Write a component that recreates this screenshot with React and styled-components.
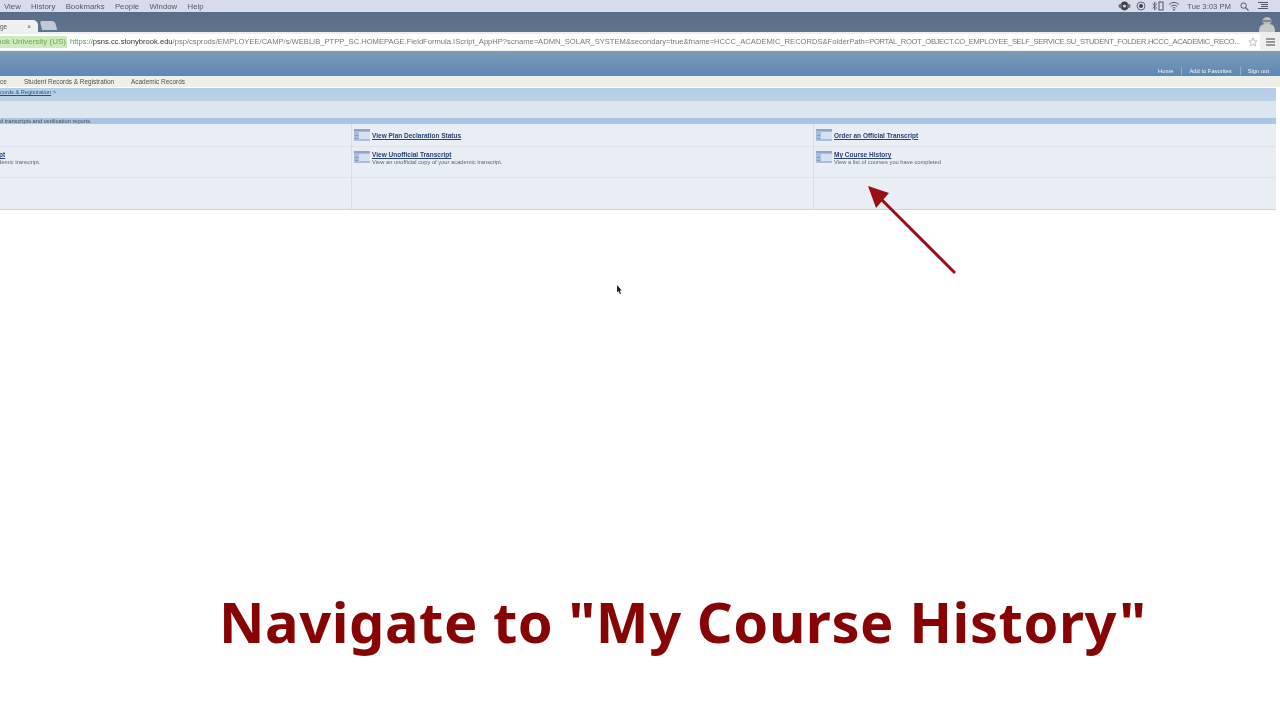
import React from "react";
import styled, { createGlobalStyle } from "styled-components";

const Global = createGlobalStyle`
  html, body { margin: 0; padding: 0; background: #fff; }
  body { font-family: "Liberation Sans", Arial, sans-serif; overflow: hidden; }
`;

const Screen = styled.div`
  position: relative;
  width: 1280px;
  height: 720px;
  overflow: hidden;
  background: #fff;
  display: flex;
  flex-direction: column;
  filter: blur(0.35px);
`;

/* mac menu bar */
const MenuBar = styled.div`
  height: 12px;
  flex: none;
  background: #d8dcea;
  display: flex;
  align-items: center;
  padding: 0 0 0 4px;
  font-size: 7.8px;
  color: #55585f;
`;
const MenuItem = styled.span`
  margin-right: 10.3px;
`;
const StatusArea = styled.div`
  margin-left: auto;
  display: flex;
  align-items: center;
  color: #55585f;
`;
const Clock = styled.span`
  font-size: 7.7px;
  margin: 0 9px 0 7px;
`;

/* browser chrome */
const TabStrip = styled.div`
  height: 20px;
  flex: none;
  background: linear-gradient(#596c89, #61748f);
  display: flex;
  align-items: flex-end;
  justify-content: space-between;
`;
const ActiveTab = styled.div`
  width: 38px;
  height: 12px;
  background: #f0f0f0;
  border-radius: 0 5px 0 0;
  display: flex;
  align-items: center;
  justify-content: space-between;
  padding-right: 7px;
  box-sizing: border-box;
  font-size: 6.5px;
  color: #555;
`;
const NewTab = styled.div`
  width: 15px;
  height: 9px;
  margin: 0 auto 2px 3px;
  background: #c3c9d3;
  border-radius: 2px 3px 0 0;
  transform: skewX(15deg);
`;
const AddressRow = styled.div`
  height: 19px;
  flex: none;
  background: #eeeeee;
  display: flex;
  align-items: center;
`;
const UrlField = styled.div`
  flex: 1;
  min-width: 0;
  height: 16px;
  background: #fff;
  display: flex;
  align-items: center;
  font-size: 7.6px;
  white-space: nowrap;
  overflow: hidden;
  color: #777;
`;
const SecureBadge = styled.span`
  flex: none;
  width: 67px;
  background: #cfeabd;
  color: #6aa354;
  font-size: 8px;
  line-height: 12px;
  margin-right: 3px;
  display: flex;
  justify-content: flex-end;
  padding-right: 1px;
  box-sizing: border-box;
`;
const Scheme = styled.span`
  color: #4fa14a;
`;
const Host = styled.span`
  color: #333;
`;
const UrlTail = styled.span`
  flex: 1;
  min-width: 0;
  overflow: hidden;
`;
const UrlEnd = styled.span`
  letter-spacing: -0.33px;
`;
const StarSlot = styled.div`
  flex: none;
  width: 14px;
  display: flex;
  justify-content: center;
`;
const MenuSlot = styled.div`
  flex: none;
  width: 20px;
  height: 19px;
  display: flex;
  align-items: center;
  justify-content: center;
`;

/* portal */
const Banner = styled.div`
  height: 25px;
  box-sizing: border-box;
  flex: none;
  background: linear-gradient(#7e9cb7, #5d88b4);
  display: flex;
  align-items: flex-end;
  justify-content: flex-end;
  padding: 0 11px 1px 0;
  font-size: 5.8px;
  color: #f2f6fb;
`;
const BannerLink = styled.span`
  line-height: 8px;
  padding: 0 ${(p) => (p.$last ? "0" : p.$pad + "px")} 0 ${(p) => (p.$last ? "7px" : "8px")};
  border-right: ${(p) => (p.$last ? "none" : "1px solid #8fb0cf")};
`;
const CrumbBar = styled.div`
  height: 11px;
  flex: none;
  background: #efefea;
  display: flex;
  align-items: center;
  font-size: 6.45px;
  color: #505050;
  border-bottom: 1px solid #fff;
`;
const Crumb = styled.span`
  width: ${(p) => p.$w}px;
  flex: none;
  white-space: nowrap;
`;
const Portal = styled.div`
  width: 1276px;
  flex: none;
  background: #e9edf4;
  border-bottom: 1px solid #cfd2d8;
`;
const PathBar = styled.div`
  height: 13px;
  background: linear-gradient(#b5cde5, #bdd2e8);
  font-size: 5.7px;
  line-height: 9px;
  color: #555;
`;
const PathLink = styled.span`
  color: #1f4f8a;
  text-decoration: underline;
`;
const Spacer = styled.div`
  height: 17px;
  background: #dde6ee;
`;
const SectionBar = styled.div`
  height: 6px;
  background: #a9c5e6;
  font-size: 5.7px;
  line-height: 6px;
  color: #444b55;
  white-space: nowrap;
`;
const Grid = styled.div`
  display: grid;
  grid-template-columns: 352px 462px 1fr;
  grid-template-rows: 23px 31px 31px;
`;
const Cell = styled.div`
  display: flex;
  align-items: ${(p) => (p.$top ? "flex-start" : "center")};
  padding: ${(p) => (p.$top ? "4px" : "0")} 0 0 ${(p) => (p.$edge ? "0" : "2px")};
  box-sizing: border-box;
  border-bottom: ${(p) => (p.$end ? "none" : "1px solid #dfe3e9")};
  border-right: ${(p) => (p.$last ? "none" : "1px solid #d8dbe2")};
`;
const CellText = styled.div`
  margin-left: ${(p) => (p.$edge ? "0" : "2px")};
  white-space: nowrap;
`;
const Title = styled.div`
  font-size: 6.5px;
  font-weight: bold;
  line-height: 7px;
  color: #2a4377;
  text-decoration: underline;
  margin-left: ${(p) => p.$shift || 0}px;
`;
const Desc = styled.div`
  font-size: 5.75px;
  line-height: 8px;
  color: #5f646d;
  margin-left: ${(p) => p.$shift || 0}px;
`;

const Stage = styled.div`
  flex: 1;
  display: flex;
  padding: 381px 0 0 219px;
`;
const Headline = styled.h1`
  margin: 0;
  font-family: "Noto Sans", sans-serif;
  font-size: 56px;
  font-weight: 700;
  line-height: 60px;
  letter-spacing: 0.55px;
  color: #860404;
  white-space: nowrap;
`;
const Arrow = styled.svg`
  position: absolute;
  left: 860px;
  top: 180px;
`;
const Cursor = styled.svg`
  position: absolute;
  left: 616px;
  top: 285px;
`;

const PageIcon = () => (
  <svg width="16" height="12" viewBox="0 0 16 12">
    <rect width="16" height="12" fill="#a9bddc" />
    <rect y="0" width="16" height="2" fill="#8ea4c9" />
    <rect x="5" y="3" width="11" height="7" fill="#d6e0f0" />
    <rect x="1" y="6" width="3" height="1" fill="#8497ba" />
    <rect x="1" y="9" width="3" height="1" fill="#8497ba" />
  </svg>
);

const StatusIcons = () => (
  <>
    <svg width="13" height="10" viewBox="0 0 13 10" style={{ marginRight: 5 }}>
      <circle cx="6.5" cy="5" r="4.4" fill="#3e4146" />
      <circle cx="2.5" cy="5" r="2" fill="#6a6d73" />
      <circle cx="10.5" cy="5" r="2" fill="#6a6d73" />
      <circle cx="6.5" cy="5" r="1.5" fill="#d8dcea" />
    </svg>
    <svg width="10" height="10" viewBox="0 0 10 10" style={{ marginRight: 6 }}>
      <circle cx="5" cy="5" r="4" fill="none" stroke="#66696f" />
      <circle cx="5" cy="5" r="2" fill="#3e4146" />
    </svg>
    <svg width="12" height="10" viewBox="0 0 12 10" style={{ marginRight: 4 }}>
      <path d="M0.5 2.5 L4.5 7 L2.5 9 V1 L4.5 3 L0.5 7.5" fill="none" stroke="#55585f" strokeWidth=".8" />
      <rect x="7" y="1" width="4" height="8" fill="none" stroke="#55585f" />
    </svg>
    <svg width="12" height="10" viewBox="0 0 12 10">
      <path d="M1 3.6 C4 .7 8 .7 11 3.6 M2.8 5.5 C4.8 3.7 7.2 3.7 9.2 5.5 M4.5 7.2 C5.5 6.4 6.5 6.4 7.5 7.2" fill="none" stroke="#55585f" />
      <circle cx="6" cy="8.8" r=".9" fill="#55585f" />
    </svg>
  </>
);

const App = () => (
  <Screen>
    <Global />
    <MenuBar>
      <MenuItem>View</MenuItem>
      <MenuItem>History</MenuItem>
      <MenuItem>Bookmarks</MenuItem>
      <MenuItem>People</MenuItem>
      <MenuItem>Window</MenuItem>
      <MenuItem>Help</MenuItem>
      <StatusArea>
        <StatusIcons />
        <Clock>Tue 3:03 PM</Clock>
        <svg width="9" height="9" viewBox="0 0 9 9" style={{ marginRight: 9 }}>
          <circle cx="3.6" cy="3.6" r="2.7" fill="none" stroke="#55585f" />
          <path d="M5.6 5.6 L8.6 8.6" stroke="#55585f" strokeWidth="1.2" />
        </svg>
        <svg width="10" height="8" viewBox="0 0 10 8" style={{ marginRight: 12 }}>
          <path d="M0 .5H10M3 2.5H10M3 4.5H10M0 6.5H10" stroke="#55585f" />
        </svg>
      </StatusArea>
    </MenuBar>

    <TabStrip>
      <ActiveTab>
        <span>ge</span>
        <span>×</span>
      </ActiveTab>
      <NewTab />
      <svg width="18" height="16" viewBox="0 0 18 16" style={{ marginRight: 4 }}>
        <ellipse cx="9" cy="5" rx="4.5" ry="4" fill="#b9bbbd" />
        <path d="M1 16 C1 9 4 8 9 8 C14 8 17 9 17 16 Z" fill="#c6c8ca" />
        <rect x="5" y="4" width="8" height="2" fill="#84878b" />
      </svg>
    </TabStrip>

    <AddressRow>
      <UrlField>
        <SecureBadge>ook University (US)</SecureBadge>
        <UrlTail>
          <Scheme>https://</Scheme>
          <Host>psns.cc.stonybrook.edu</Host>
          /psp/csprods/EMPLOYEE/CAMP/s/WEBLIB_PTPP_SC.HOMEPAGE.FieldFormula.IScript_AppHP?scname=ADMN_SOLAR_SYSTEM&amp;secondary=true&amp;fname=HCCC_ACADEMIC_RECORDS&amp;FolderPath=
          <UrlEnd>PORTAL_ROOT_OBJECT.CO_EMPLOYEE_SELF_SERVICE.SU_STUDENT_FOLDER.HCCC_ACADEMIC_RECO...</UrlEnd>
        </UrlTail>
        <StarSlot>
          <svg width="10" height="10" viewBox="0 0 24 24">
            <path d="M12 2 L15 9 L22 9.5 L16.6 14 L18.4 21.5 L12 17.5 L5.6 21.5 L7.4 14 L2 9.5 L9 9 Z" fill="none" stroke="#b5b5b5" strokeWidth="2" />
          </svg>
        </StarSlot>
      </UrlField>
      <MenuSlot>
        <svg width="9" height="8" viewBox="0 0 9 8">
          <path d="M0 1H9M0 4H9M0 7H9" stroke="#444" strokeWidth="1.2" />
        </svg>
      </MenuSlot>
    </AddressRow>

    <Banner>
      <BannerLink $pad={7}>Home</BannerLink>
      <BannerLink $pad={8}>Add to Favorites</BannerLink>
      <BannerLink $last>Sign out</BannerLink>
    </Banner>

    <CrumbBar>
      <Crumb $w={24}>ce</Crumb>
      <Crumb $w={107}>Student Records &amp; Registration</Crumb>
      <Crumb $w={60}>Academic Records</Crumb>
    </CrumbBar>

    <Portal>
      <PathBar>
        <PathLink>cords &amp; Registration</PathLink> &gt;
      </PathBar>
      <Spacer />
      <SectionBar>d transcripts and verification reports.</SectionBar>
      <Grid>
        <Cell $edge />
        <Cell>
          <PageIcon />
          <CellText>
            <Title>View Plan Declaration Status</Title>
          </CellText>
        </Cell>
        <Cell $last>
          <PageIcon />
          <CellText>
            <Title>Order an Official Transcript</Title>
          </CellText>
        </Cell>

        <Cell $edge $top>
          <CellText $edge>
            <Title $shift={-1}>pt</Title>
            <Desc $shift={-5}>ademic transcript.</Desc>
          </CellText>
        </Cell>
        <Cell $top>
          <PageIcon />
          <CellText>
            <Title>View Unofficial Transcript</Title>
            <Desc>View an unofficial copy of your academic transcript.</Desc>
          </CellText>
        </Cell>
        <Cell $top $last>
          <PageIcon />
          <CellText>
            <Title>My Course History</Title>
            <Desc>View a list of courses you have completed</Desc>
          </CellText>
        </Cell>

        <Cell $end />
        <Cell $end />
        <Cell $end $last />
      </Grid>
    </Portal>

    <Stage>
      <Headline>Navigate to "My Course History"</Headline>
    </Stage>

    <Arrow width="100" height="100" viewBox="0 0 100 100">
      <path d="M95 93 L20 18" stroke="#9a0f14" strokeWidth="3" />
      <path d="M8 6 L29 13 L16 28 Z" fill="#9a0f14" />
    </Arrow>
    <Cursor width="6" height="10" viewBox="0 0 6 10">
      <path d="M1 0 V7.5 L2.6 6 L3.8 9 L5 8.4 L3.8 5.6 H5.8 Z" fill="#222" />
    </Cursor>
  </Screen>
);

export default App;
